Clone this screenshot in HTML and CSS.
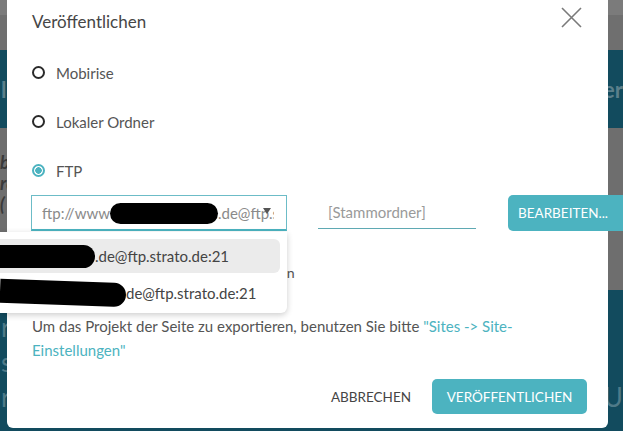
FILE: index.html
```html
<!DOCTYPE html>
<html lang="de">
<head>
  <meta charset="UTF-8" />
  <title>Veröffentlichen</title>
  <link rel="stylesheet" href="styles.css">
</head>
<body>
  <div class="backdrop">
    <div class="band band-top"></div>
    <div class="band band-teal">
      <span>l</span><span>ser</span>
    </div>
    <div class="band band-gray">
      <span class="dim">b<br>rc<br>(</span>
    </div>
    <div class="band band-teal band-low">
      <span>rl<br>st<br>r</span><span>Vi<br>sö<br>n U</span>
    </div>
  </div>

  <div class="modal">
    <div class="modal-header">
      <h3 class="modal-title">Veröffentlichen</h3>
      <svg class="close" width="21" height="21" viewBox="0 0 21 21">
        <path d="M1 1 L20 20 M20 1 L1 20" stroke="#7a7a7a" stroke-width="1.6" fill="none"/>
      </svg>
    </div>

    <label class="radio-row"><span class="radio"></span>Mobirise</label>
    <label class="radio-row"><span class="radio"></span>Lokaler Ordner</label>
    <label class="radio-row"><span class="radio checked"></span>FTP</label>

    <div class="ftp-row">
      <div class="select">
        <span class="select-text">ftp://www<span class="blob blob-a"></span>.de@ftp.strato.de:21</span>
        <span class="arrow"></span>
      </div>
      <div class="folder">[Stammordner]</div>
      <button class="btn btn-edit">Bearbeiten...</button>
    </div>

    <div class="check-row">
      <span class="checkbox"></span>Nur geänderte Dateien veröffentlichen
    </div>

    <p class="hint">Um das Projekt der Seite zu exportieren, benutzen Sie bitte <a href="#">"Sites -&gt; Site-Einstellungen"</a></p>

    <div class="modal-footer">
      <button class="btn btn-link">Abbrechen</button>
      <button class="btn btn-primary">Veröffentlichen</button>
    </div>
  </div>

  <ul class="dropdown">
    <li class="active"><span class="blob blob-b"></span>.de@ftp.strato.de:21</li>
    <li><span class="blob blob-c"></span>de@ftp.strato.de:21</li>
  </ul>
</body>
</html>
```

FILE: styles.css
```css
html, body {
  margin: 0;
  padding: 0;
  width: 623px;
  height: 431px;
  overflow: hidden;
  font-family: 'Lato', 'Liberation Sans', sans-serif;
}

body {
  position: relative;
  background: #6f6f6f;
}

/* page behind the dialog */
.backdrop {
  display: flex;
  flex-direction: column;
  height: 100%;
}

.band {
  display: flex;
  justify-content: space-between;
  align-items: center;
  font-size: 22px;
  font-weight: 700;
  color: #5b7f8b;
}

.band-top {
  height: 50px;
  background: linear-gradient(#7b7b7b 0 15px, #6f6f6f 15px);
}

.band-teal {
  height: 78px;
  background: #124b5e;
  padding: 0 0 0 1px;
}

.band-gray {
  height: 162px;
  background: #6e6e6e;
  align-items: flex-start;
  padding-top: 24px;
  box-sizing: border-box;
}

.band-gray .dim {
  color: #3a3a3a;
  font-style: italic;
  line-height: 21px;
  font-size: 18px;
}

.band-low {
  flex: 1;
  align-items: flex-start;
  padding-top: 20px;
  font-weight: 400;
  font-size: 26px;
  line-height: 35px;
  color: #4f7a88;
}

/* dialog */
.modal {
  position: absolute;
  left: 7px;
  top: 0;
  width: 601px;
  height: 428px;
  background: #fff;
  border-radius: 0 0 6px 6px;
  box-sizing: border-box;
  padding: 0 0 0 25px;
  color: #4a4a4a;
}

.modal-header {
  display: flex;
  justify-content: space-between;
  align-items: flex-start;
  height: 48px;
  padding-right: 26px;
}

.modal-title {
  margin: 11px 0 0;
  font-size: 17px;
  font-weight: 400;
  color: #464646;
}

.close {
  margin-top: 7px;
}

.radio-row {
  display: flex;
  align-items: center;
  gap: 11px;
  height: 49px;
  font-size: 15px;
  color: #555;
}

.radio {
  width: 13px;
  height: 13px;
  border: 2px solid #2a2a2a;
  border-radius: 50%;
  box-sizing: border-box;
}

.radio.checked {
  border-color: #4cb3c0;
  background: radial-gradient(circle, #4cb3c0 0 3px, #fff 3.5px);
}

.ftp-row {
  display: flex;
  align-items: flex-start;
  height: 36px;
  margin-left: -1px;
}

.ftp-row > * {
  flex: none;
}

.select {
  position: relative;
  width: 256px;
  height: 36px;
  box-sizing: border-box;
  border: 1px solid #6cbcc7;
  border-bottom: 2px solid #4cb3c0;
  padding: 0 12px 0 10px;
  display: flex;
  align-items: center;
  font-size: 15px;
  color: #8a8a8a;
}

.select-text {
  display: flex;
  align-items: center;
  white-space: nowrap;
  overflow: hidden;
}

.select-text .blob {
  flex: none;
}

.arrow {
  position: absolute;
  right: 15px;
  top: 12px;
  border-left: 4px solid transparent;
  border-right: 4px solid transparent;
  border-top: 6px solid #555;
}

.folder {
  width: 158px;
  margin-left: 31px;
  height: 34px;
  box-sizing: border-box;
  border-bottom: 1px solid #5fa9b3;
  padding-left: 10px;
  display: flex;
  align-items: center;
  font-size: 15px;
  color: #9a9a9a;
}

.btn {
  border: none;
  font-family: inherit;
  text-transform: uppercase;
  cursor: pointer;
}

.btn-edit {
  margin-left: 32px;
  width: 115px;
  height: 36px;
  background: #4cb3c0;
  color: #fff;
  font-size: 13.5px;
  border-radius: 5px 0 0 5px;
  padding: 0 0 0 10px;
  text-align: left;
}

.check-row {
  display: flex;
  align-items: center;
  gap: 10px;
  height: 83px;
  font-size: 14.2px;
  color: #555;
}

.checkbox {
  width: 13px;
  height: 13px;
  border: 2px solid #333;
  box-sizing: border-box;
}

.hint {
  margin: 0;
  max-width: 510px;
  font-size: 15px;
  line-height: 24px;
  color: #555;
}

.hint a {
  color: #4cb3c0;
  text-decoration: none;
}

.modal-footer {
  display: flex;
  justify-content: flex-end;
  align-items: center;
  gap: 21px;
  margin-top: 17px;
  padding-right: 21px;
}

.btn-link {
  background: none;
  color: #454545;
  font-size: 13.5px;
  padding: 0;
}

.btn-primary {
  width: 155px;
  height: 35px;
  background: #4cb3c0;
  color: #fff;
  font-size: 13.5px;
  border-radius: 5px;
}

/* open select list */
.dropdown {
  position: absolute;
  left: 0;
  top: 232px;
  width: 287px;
  height: 81px;
  margin: 0;
  padding: 7px 7px 0 0;
  box-sizing: border-box;
  list-style: none;
  background: #fff;
  border-radius: 0 0 6px 0;
  box-shadow: 0 2px 6px rgba(0, 0, 0, 0.2);
}

.dropdown li {
  display: flex;
  align-items: center;
  height: 34px;
  font-size: 15px;
  color: #444;
  white-space: nowrap;
}

.dropdown li.active {
  background: #ebebeb;
  border-radius: 0 6px 6px 0;
  margin-bottom: 3px;
}

.blob {
  display: inline-block;
  background: #000;
  border-radius: 12px;
}

.blob-a {
  width: 108px;
  height: 21px;
  margin-top: 2px;
}

.blob-b {
  width: 95px;
  height: 23px;
  border-radius: 0 12px 12px 0;
}

.blob-c {
  width: 126px;
  height: 24px;
  border-radius: 0 12px 12px 0;
  transform: rotate(2deg);
}
```
